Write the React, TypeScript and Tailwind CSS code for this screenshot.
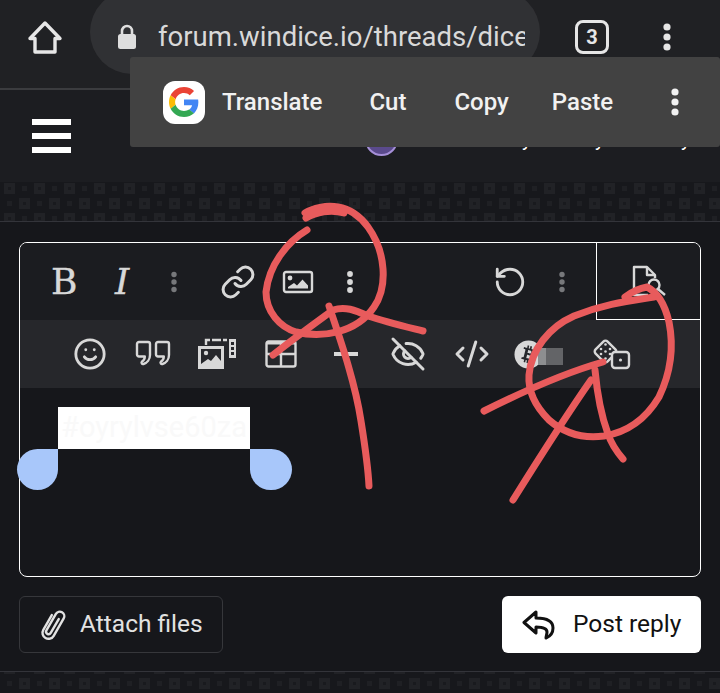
import { useId } from "react";
import { CodeXml, EyeOff, Link, RotateCcw, Smile } from "lucide-react";
import { FaBitcoin } from "react-icons/fa";

function DotsIcon({ className }: { className: string }) {
  return (
    <svg width="8" height="30" viewBox="0 0 8 30" className={`shrink-0 ${className}`} fill="currentColor">
      <circle cx="4" cy="5" r="3.6" />
      <circle cx="4" cy="15" r="3.6" />
      <circle cx="4" cy="25" r="3.6" />
    </svg>
  );
}

function PatternStrip({ offset, className }: { offset: number; className: string }) {
  const id = useId();
  return (
    <svg width="720" className={className}>
      <defs>
        <pattern id={id} width="30" height="30" patternUnits="userSpaceOnUse" patternTransform={`translate(0 ${offset})`}>
          <rect x="4" y="1" width="11" height="11" fill="#212226" />
          <rect x="8" y="5" width="3" height="3" fill="#191a1e" />
          <rect x="22" y="4" width="5" height="5" fill="#1f2024" />
          <rect x="19" y="16" width="11" height="11" fill="#212226" />
          <rect x="23" y="20" width="3" height="3" fill="#191a1e" />
          <rect x="7" y="19" width="5" height="5" fill="#1f2024" />
        </pattern>
      </defs>
      <rect width="720" height="100%" fill={`url(#${id})`} />
    </svg>
  );
}

function GoogleLogo() {
  return (
    <svg width="30" height="30" viewBox="0 0 48 48">
      <path fill="#EA4335" d="M24 9.5c3.54 0 6.71 1.22 9.21 3.6l6.85-6.85C35.9 2.38 30.47 0 24 0 14.62 0 6.51 5.38 2.56 13.22l7.98 6.19C12.43 13.72 17.74 9.5 24 9.5z" />
      <path fill="#4285F4" d="M46.98 24.55c0-1.57-.15-3.09-.38-4.55H24v9.02h12.94c-.58 2.96-2.26 5.48-4.78 7.18l7.73 6c4.51-4.18 7.09-10.36 7.09-17.65z" />
      <path fill="#FBBC05" d="M10.53 28.59c-.48-1.45-.76-2.99-.76-4.59s.27-3.14.76-4.59l-7.98-6.19C.92 16.46 0 20.12 0 24c0 3.88.92 7.54 2.56 10.78l7.97-6.19z" />
      <path fill="#34A853" d="M24 48c6.48 0 11.93-2.13 15.89-5.81l-7.73-6c-2.15 1.45-4.92 2.3-8.16 2.3-6.26 0-11.57-4.22-13.47-9.91l-7.98 6.19C6.51 42.62 14.62 48 24 48z" />
    </svg>
  );
}

function HomeIcon() {
  return (
    <svg width="36" height="35" viewBox="0 0 36 35" fill="none" stroke="currentColor" strokeWidth="3.4" strokeLinejoin="round">
      <path d="M18 3 33 18.500h-5V32H8V18.500H3z" />
    </svg>
  );
}

function LockIcon() {
  return (
    <svg width="20" height="26" viewBox="0 0 20 26" fill="none" className="shrink-0">
      <path d="M5 11V7a5 5 0 0 1 10 0v4" stroke="#dedede" strokeWidth="2.600" />
      <rect x="1" y="10" width="18" height="15" rx="2.500" fill="#dedede" />
    </svg>
  );
}

function ImageIcon() {
  return (
    <svg width="32" height="24" viewBox="0 0 32 24" fill="none" stroke="currentColor" strokeWidth="2.400" className="shrink-0">
      <rect x="2" y="2" width="28" height="20" rx="2" />
      <circle cx="8" cy="8" r="2.400" fill="currentColor" stroke="none" />
      <path d="M6 18.500h20v-3l-5.500-6-5.500 6-3-2.500-6 4z" fill="currentColor" stroke="none" />
    </svg>
  );
}

function QuoteIcon() {
  const d = "h9a2 2 0 0 1 2 2v11c0 4.500-3 8-6.500 9a1.500 1.500 0 0 1-1.500-2.500c1.800-1 2.800-3 2.800-5H3a2 2 0 0 1-2-2V4a2 2 0 0 1 2-2z";
  return (
    <svg width="36" height="28" viewBox="0 0 36 28" fill="none" stroke="currentColor" strokeWidth="2.400" strokeLinejoin="round" className="shrink-0">
      <path d={`M3 2${d}`} transform="translate(1 0)" />
      <path d={`M3 2${d}`} transform="translate(20 0)" />
    </svg>
  );
}

function GalleryIcon() {
  return (
    <svg width="40" height="32" viewBox="0 0 40 32" fill="none" className="shrink-0">
      <path d="M9 7V2h21" stroke="currentColor" strokeWidth="2.400" strokeDasharray="9 2" />
      <rect x="32" y="1" width="7" height="19" fill="currentColor" />
      <rect x="34" y="4" width="3" height="3" fill="#26272b" />
      <rect x="34" y="9" width="3" height="3" fill="#26272b" />
      <rect x="34" y="14" width="3" height="3" fill="#26272b" />
      <path d="M1 8h26v23H1z" fill="currentColor" />
      <path d="M4 11h20v12l-5-6-5 6-3-2-7 5z" fill="#26272b" />
      <circle cx="9" cy="15" r="2.200" fill="currentColor" />
    </svg>
  );
}

function TableIcon() {
  return (
    <svg width="32" height="28" viewBox="0 0 32 28" fill="none" stroke="currentColor" strokeWidth="2.400" className="shrink-0">
      <rect x="1.500" y="1.500" width="29" height="25" rx="2" />
      <path d="M1.500 14h29M16 3v23" />
      <path d="M1.500 3h29" strokeWidth="3" />
    </svg>
  );
}

function DiceIcon() {
  return (
    <svg width="40" height="32" viewBox="0 0 40 32" fill="none" stroke="currentColor" strokeWidth="2.400" strokeLinejoin="round" className="shrink-0">
      <rect x="5" y="5" width="17" height="17" rx="3" transform="rotate(45 13.500 13.500)" />
      <rect x="20" y="14" width="17" height="16" rx="3" fill="#26272b" />
      <g fill="currentColor" stroke="none">
        <circle cx="13.500" cy="6.500" r="1.300" />
        <circle cx="9" cy="11" r="1.300" />
        <circle cx="18" cy="11" r="1.300" />
        <circle cx="13.500" cy="13.500" r="1.300" />
        <circle cx="9" cy="16" r="1.300" />
        <circle cx="18" cy="16" r="1.300" />
        <circle cx="13.500" cy="20.500" r="1.300" />
        <circle cx="28.500" cy="22" r="1.600" />
      </g>
    </svg>
  );
}

function FilePreviewIcon() {
  return (
    <svg width="36" height="32" viewBox="0 0 36 32" fill="none" stroke="currentColor" strokeWidth="2.400" strokeLinejoin="round" className="shrink-0">
      <path d="M17 30H3V2h13l8 8v3" />
      <path d="M16 2v8h8" />
      <circle cx="23" cy="20" r="5.500" />
      <path d="m27 24 7 6" />
    </svg>
  );
}

function PaperclipIcon() {
  return (
    <svg width="30" height="34" viewBox="0 0 30 34" fill="none" stroke="currentColor" strokeWidth="2.400" strokeLinecap="round" className="shrink-0">
      <g transform="rotate(30 15 17)">
        <path d="M9 9v17a6 6 0 0 0 12 0V6a4.500 4.500 0 0 0-9 0v19a2.500 2.500 0 0 0 5 0V9" />
      </g>
    </svg>
  );
}

function ReplyIcon() {
  return (
    <svg width="34" height="30" viewBox="0 0 34 30" fill="none" stroke="currentColor" strokeWidth="3" strokeLinejoin="round" className="shrink-0">
      <path d="M14 2 2 12.500 14 23v-6c6 0 11 1 11 5 0 2-1 4-1 6 5-2 7-6 7-10 0-7-7-10-17-10z" />
    </svg>
  );
}

function Scribbles() {
  return (
    <svg width="720" height="693" viewBox="0 0 720 693" className="absolute left-0 top-0 pointer-events-none" fill="none" stroke="#e85b5c" strokeWidth="7" strokeLinecap="round" strokeLinejoin="round">
      <path d="M306 218c10-6 25-9 38-5M307 230c-20 12-38 35-41 62 0 20 14 35 30 40 24 6 60 2 78-25 14-20 12-55-6-80-8-11-18-18-30-20-12-2-25 1-33 6" />
      <path d="M273 355c20-16 45-34 60-45 12-4 22 0 35 6 18 6 35 10 55 15" />
      <path d="M329 306c10 30 26 75 32 115 4 25 7 45 8 65" />
      <path d="M625 297c8-6 16-9 22-10 10 5 18 18 22 35 5 25 2 50-10 75-12 20-30 35-55 39-22 3-40-3-55-16-14-14-21-30-20-45 2-25 20-48 45-59 30-12 55-15 80-19" />
      <path d="M484 411c40-20 80-38 119-49" />
      <path d="M513 500c25-40 50-80 78-120" />
      <path d="M595 370c2 22 6 45 13 64 3 9 9 18 15 25" />
    </svg>
  );
}

export default function App() {
  return (
    <div className="relative h-[693px] w-[720px] overflow-hidden bg-[#16171b] font-['Roboto',sans-serif]">
      {/* browser bar */}
      <div className="flex h-[90px] items-start border-b-2 border-[#3b3c3f] bg-[#202124]">
        <div className="flex h-[74px] w-[90px] shrink-0 items-center justify-center text-[#e6e6e6]">
          <HomeIcon />
        </div>
        <div className="-mt-[10px] flex h-[84px] w-[450px] shrink-0 items-center overflow-hidden rounded-[42px] bg-[#303134] pl-[27px] pt-[10px]">
          <LockIcon />
          <span className="ml-[21px] w-[367px] overflow-hidden whitespace-nowrap text-[27.500px] text-[#d9d9d9]">forum.windice.io/threads/dice</span>
        </div>
        <div className="flex h-[74px] w-[104px] shrink-0 items-center justify-center">
          <div className="flex h-[34px] w-[34px] items-center justify-center rounded-[8px] border-[3px] border-[#e6e6e6] text-[20px] font-bold text-[#e6e6e6]">3</div>
        </div>
        <div className="flex h-[74px] flex-1 items-center pl-[19px] text-[#e6e6e6]">
          <DotsIcon className="" />
        </div>
      </div>

      {/* site header, mostly under the text menu */}
      <div className="flex h-[92px] items-center bg-[#1c1d21] pl-[32px] text-[20px] text-white">
        <div className="flex h-[34px] w-[39px] flex-col justify-between">
          <span className="h-[6px] bg-white" />
          <span className="h-[6px] bg-white" />
          <span className="h-[6px] bg-white" />
        </div>
        <div className="ml-[294px] h-[40px] w-[33px] shrink-0 rounded-full border-2 border-[#a58fd8] bg-[#5a4a8c]" />
        <span className="ml-[124px] mt-[6px] w-[10px]">y</span>
        <span className="ml-[63px] mt-[6px] w-[10px]">y</span>
        <span className="ml-[76px] mt-[6px] w-[10px]">y</span>
      </div>

      <PatternStrip offset={0} className="block h-[39px] bg-[#17181c]" />

      {/* editor + buttons */}
      <div className="border-t border-[#33343a] px-[19px] pt-[20px]">
        <div className="h-[335px] rounded-[8px] border border-white">
          <div className="flex h-[77px] items-center rounded-t-[7px] bg-[#1b1c20] text-[#d8d8d8]">
            <span className="ml-[31px] w-[24px] shrink-0 text-center text-[36px] leading-none font-['DejaVu_Serif',serif] [-webkit-text-stroke:0.4px_#d8d8d8]">B</span>
            <span className="ml-[35px] w-[24px] shrink-0 text-center text-[36px] italic leading-none font-['DejaVu_Serif',serif] [-webkit-text-stroke:0.4px_#d8d8d8]">I</span>
            <DotsIcon className="ml-[36px] scale-[0.75] text-[#77787b]" />
            <Link size={36} strokeWidth={2} className="ml-[42px] shrink-0" />
            <span className="ml-[26px] block"><ImageIcon /></span>
            <DotsIcon className="ml-[32px] scale-[0.8]" />
            <RotateCcw size={34} strokeWidth={2} className="ml-[139px] shrink-0" />
            <DotsIcon className="ml-[31px] scale-[0.75] text-[#77787b]" />
            <div className="ml-[30px] flex h-full flex-1 items-center justify-center rounded-tr-[7px] border-b border-l border-white">
              <FilePreviewIcon />
            </div>
          </div>
          <div className="flex h-[68px] items-center bg-[#26272b] pl-[53px] text-[#d8d8d8]">
            <Smile size={34} strokeWidth={2} className="shrink-0" />
            <span className="ml-[28px] block"><QuoteIcon /></span>
            <span className="ml-[26px] block"><GalleryIcon /></span>
            <span className="ml-[28px] block"><TableIcon /></span>
            <span className="ml-[37px] block h-[4px] w-[24px] shrink-0 bg-[#d8d8d8]" />
            <EyeOff size={36} strokeWidth={2} className="ml-[32px] shrink-0" />
            <CodeXml size={36} strokeWidth={2} className="ml-[28px] shrink-0" />
            <FaBitcoin size={29} className="ml-[24px] shrink-0" />
            <div className="-ml-[5px] mt-[5px] flex h-[17px] w-[25px] shrink-0">
              <span className="w-[8px] bg-[#8d8e90]" />
              <span className="flex-1 bg-[#636467]" />
            </div>
            <span className="ml-[29px] block"><DiceIcon /></span>
          </div>
          <div className="h-[188px] pl-[38px] pt-[19px]">
            <div className="flex h-[42px] w-[192px] items-center justify-center whitespace-nowrap bg-white text-[29px] text-[#f9f9f9]">#oyrylvse60za</div>
            <div className="-ml-[41px] flex w-[275px] justify-between">
              <span className="h-[41px] w-[41px] rounded-b-full rounded-tl-full bg-[#a8c7fa]" />
              <span className="h-[41px] w-[42px] rounded-b-full rounded-tr-full bg-[#a8c7fa]" />
            </div>
          </div>
        </div>
        <div className="mt-[19px] flex items-start justify-between">
          <div className="flex h-[57px] w-[204px] items-center rounded-[6px] border border-[#36373b] pl-[18px] text-[24.500px] text-[#e2e2e2]">
            <PaperclipIcon />
            <span className="ml-[12px]">Attach files</span>
          </div>
          <div className="flex h-[57px] w-[199px] items-center rounded-[6px] bg-white pl-[20px] text-[24.500px] text-[#111]">
            <ReplyIcon />
            <span className="ml-[17px]">Post reply</span>
          </div>
        </div>
      </div>
      <div className="mt-[18px] border-t border-[#33343a]">
        <PatternStrip offset={-10} className="block h-[21px] bg-[#17181c]" />
      </div>

      {/* chrome text selection menu */}
      <div className="absolute left-[130px] top-[57px] flex h-[90px] w-[590px] items-center rounded-[3px] bg-[#424242] text-[24px] font-medium text-[#f1f1f1]">
        <div className="ml-[33px] flex h-[43px] w-[42px] items-center justify-center rounded-[12px] bg-white">
          <GoogleLogo />
        </div>
        <span className="ml-[17px]">Translate</span>
        <span className="ml-[47px]">Cut</span>
        <span className="ml-[48px]">Copy</span>
        <span className="ml-[43px]">Paste</span>
        <DotsIcon className="ml-[58px]" />
      </div>

      <Scribbles />
    </div>
  );
}
